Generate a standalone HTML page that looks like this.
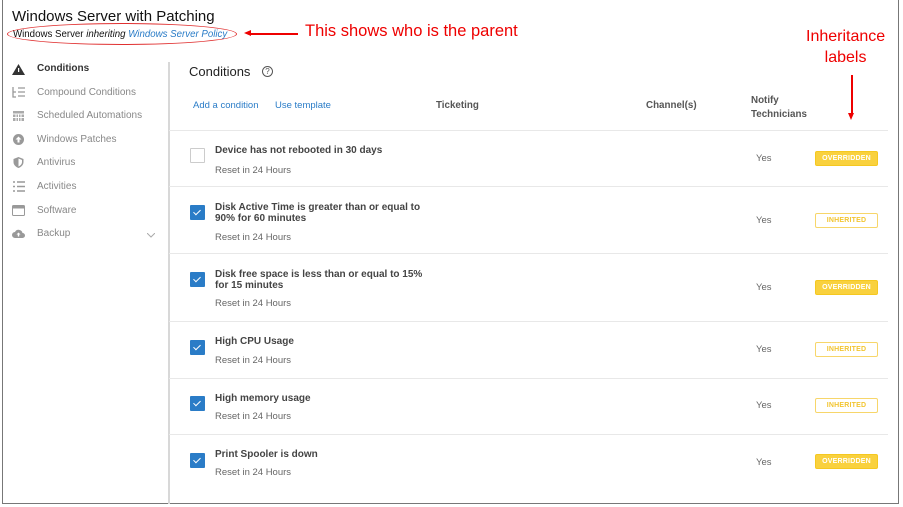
<!DOCTYPE html><html><head><style>
*{margin:0;padding:0;box-sizing:border-box}
body{width:903px;height:507px;background:#fff;font-family:"Liberation Sans",sans-serif;position:relative;overflow:hidden}
.a{position:absolute;white-space:nowrap}
.frame{position:absolute;left:2px;top:0;width:897px;height:504px;border:1px solid #777;border-top:none}
.nav{font-size:10px;color:#888;left:37px}
.ic{position:absolute;left:12px;width:13px;height:11px}
.sep{position:absolute;left:169px;width:719px;height:1px;background:#e8e8e8}
.t{font-size:10px;color:#444;font-weight:bold;left:215px;line-height:11px}
.s{font-size:9.5px;color:#666;left:215px}
.cb{position:absolute;left:190px;width:15px;height:15px;background:#2a7cc7;border-radius:1px}
.cb:after{content:"";position:absolute;left:5px;top:3px;width:3px;height:6px;border:solid #fff;border-width:0 1.5px 1.5px 0;transform:rotate(45deg)}
.y{font-size:9.5px;color:#666;left:756px}
.b{position:absolute;left:815px;width:63px;height:15px;border-radius:2px;font-size:7px;font-weight:bold;text-align:center;line-height:13px;letter-spacing:.2px}
.o{background:#f9d13e;color:#fff;border:1px solid #f5c820}
.i{background:#fff;color:#f2c531;border:1px solid #f7d66a}
.h{font-size:9.8px;color:#555;font-weight:bold}
</style></head><body>
<div class="frame"></div>
<div class="a" style="left:12px;top:8px;font-size:15px;color:#111">Windows Server with Patching</div>
<div class="a" style="left:13px;top:29px;font-size:9.7px;color:#111">Windows Server <i>inheriting</i> <i style="color:#2a7cc7">Windows Server Policy</i></div>
<div style="position:absolute;left:7px;top:23px;width:230px;height:22px;border:1.5px solid #e03030;border-radius:50%"></div>
<div style="position:absolute;left:250px;top:33px;width:48px;height:1.5px;background:#e00"></div>
<div style="position:absolute;left:244px;top:30px;border-right:7px solid #e00;border-top:3.5px solid transparent;border-bottom:3.5px solid transparent"></div>
<div class="a" style="left:305px;top:22px;font-size:16.5px;color:#e00">This shows who is the parent</div>
<div class="a" style="left:806px;top:26px;font-size:16px;color:#e00;text-align:center;line-height:21px">Inheritance<br>labels</div>
<div style="position:absolute;left:851px;top:75px;width:1.5px;height:39px;background:#e00"></div>
<div style="position:absolute;left:848px;top:113px;border-top:7px solid #e00;border-left:3.5px solid transparent;border-right:3.5px solid transparent"></div>

<svg class="ic" style="top:64px" viewBox="0 0 13 11"><path d="M6.5 0L13 11H0z" fill="#333"/><rect x="6" y="4" width="1.2" height="4" fill="#fff"/></svg>
<div class="a nav" style="top:63px;color:#333;font-weight:bold">Conditions</div>
<div class="a nav" style="top:87px">Compound Conditions</div>
<svg class="ic" style="top:87px" viewBox="0 0 13 11"><path d="M1 0v10h3M1 5h3M6 1h7M6 5h7M6 9h7" stroke="#999" stroke-width="1.3" fill="none"/></svg>
<div class="a nav" style="top:110px">Scheduled Automations</div>
<svg class="ic" style="top:110px" viewBox="0 0 13 11"><rect x="1" y="1" width="11" height="10" fill="#aaa"/><path d="M1 4h11M4 4v7M6.5 4v7M9 4v7M1 7.5h11" stroke="#fff"/></svg>
<div class="a nav" style="top:134px">Windows Patches</div>
<svg class="ic" style="top:134px" viewBox="0 0 13 11"><circle cx="6.5" cy="5.5" r="5.5" fill="#999"/><path d="M6.5 2.5l3 3h-2v3h-2v-3h-2z" fill="#fff"/></svg>
<div class="a nav" style="top:157px">Antivirus</div>
<svg class="ic" style="top:157px" viewBox="0 0 13 11"><path d="M6.5 0l5 2v3c0 3-2.5 5-5 6-2.5-1-5-3-5-6V2z" fill="#999"/><path d="M6.5 1.5v8c1.8-.9 3.5-2.4 3.5-4.5V3z" fill="#fff"/></svg>
<div class="a nav" style="top:181px">Activities</div>
<svg class="ic" style="top:181px" viewBox="0 0 13 11"><path d="M1 1h2M5 1h8M1 5.5h2M5 5.5h8M1 10h2M5 10h8" stroke="#999" stroke-width="1.4"/></svg>
<div class="a nav" style="top:205px">Software</div>
<svg class="ic" style="top:205px" viewBox="0 0 13 11"><rect x=".5" y=".5" width="12" height="10" rx="1" fill="none" stroke="#999"/><rect x=".5" y=".5" width="12" height="3" fill="#999"/></svg>
<div class="a nav" style="top:228px">Backup</div>
<svg class="ic" style="top:228px" viewBox="0 0 13 11"><path d="M3 10a3 3 0 010-6 4 4 0 017.5 1 2.5 2.5 0 010 5z" fill="#999"/><path d="M6.5 4.5l2 2h-1.3v2H5.8v-2H4.5z" fill="#fff"/></svg>
<svg style="position:absolute;left:147px;top:233px" width="8" height="5"><path d="M0 0l4 4 4-4" stroke="#aaa" fill="none"/></svg>
<div style="position:absolute;left:168px;top:62px;width:1.5px;height:442px;background:#d8d8d8"></div>

<div class="a" style="left:189px;top:64px;font-size:13px;color:#222">Conditions</div>
<div style="position:absolute;left:262px;top:66px;width:11px;height:11px;border:1px solid #555;border-radius:50%;font-size:8px;text-align:center;line-height:9px;color:#555">?</div>
<div class="a" style="left:193px;top:100px;font-size:9.5px;color:#2a7cc7">Add a condition</div>
<div class="a" style="left:275px;top:100px;font-size:9.5px;color:#2a7cc7">Use template</div>
<div class="a h" style="left:436px;top:100px">Ticketing</div>
<div class="a h" style="left:646px;top:100px">Channel(s)</div>
<div class="a h" style="left:751px;top:94px;line-height:14px">Notify<br>Technicians</div>

<div class="sep" style="top:130px"></div>
<div style="position:absolute;left:190px;top:148px;width:15px;height:15px;border:1px solid #ccc;border-radius:1px"></div>
<div class="a t" style="top:145px">Device has not rebooted in 30 days</div>
<div class="a s" style="top:165px">Reset in 24 Hours</div>
<div class="a y" style="top:153px">Yes</div><div class="b o" style="top:151px">OVERRIDDEN</div>

<div class="sep" style="top:186px"></div>
<div class="cb" style="top:205px"></div>
<div class="a t" style="top:202px">Disk Active Time is greater than or equal to<br>90% for 60 minutes</div>
<div class="a s" style="top:232px">Reset in 24 Hours</div>
<div class="a y" style="top:215px">Yes</div><div class="b i" style="top:213px">INHERITED</div>

<div class="sep" style="top:253px"></div>
<div class="cb" style="top:272px"></div>
<div class="a t" style="top:269px">Disk free space is less than or equal to 15%<br>for 15 minutes</div>
<div class="a s" style="top:298px">Reset in 24 Hours</div>
<div class="a y" style="top:282px">Yes</div><div class="b o" style="top:280px">OVERRIDDEN</div>

<div class="sep" style="top:321px"></div>
<div class="cb" style="top:340px"></div>
<div class="a t" style="top:336px">High CPU Usage</div>
<div class="a s" style="top:355px">Reset in 24 Hours</div>
<div class="a y" style="top:344px">Yes</div><div class="b i" style="top:342px">INHERITED</div>

<div class="sep" style="top:378px"></div>
<div class="cb" style="top:396px"></div>
<div class="a t" style="top:393px">High memory usage</div>
<div class="a s" style="top:411px">Reset in 24 Hours</div>
<div class="a y" style="top:400px">Yes</div><div class="b i" style="top:398px">INHERITED</div>

<div class="sep" style="top:434px"></div>
<div class="cb" style="top:453px"></div>
<div class="a t" style="top:449px">Print Spooler is down</div>
<div class="a s" style="top:467px">Reset in 24 Hours</div>
<div class="a y" style="top:457px">Yes</div><div class="b o" style="top:454px">OVERRIDDEN</div>
</body></html>
